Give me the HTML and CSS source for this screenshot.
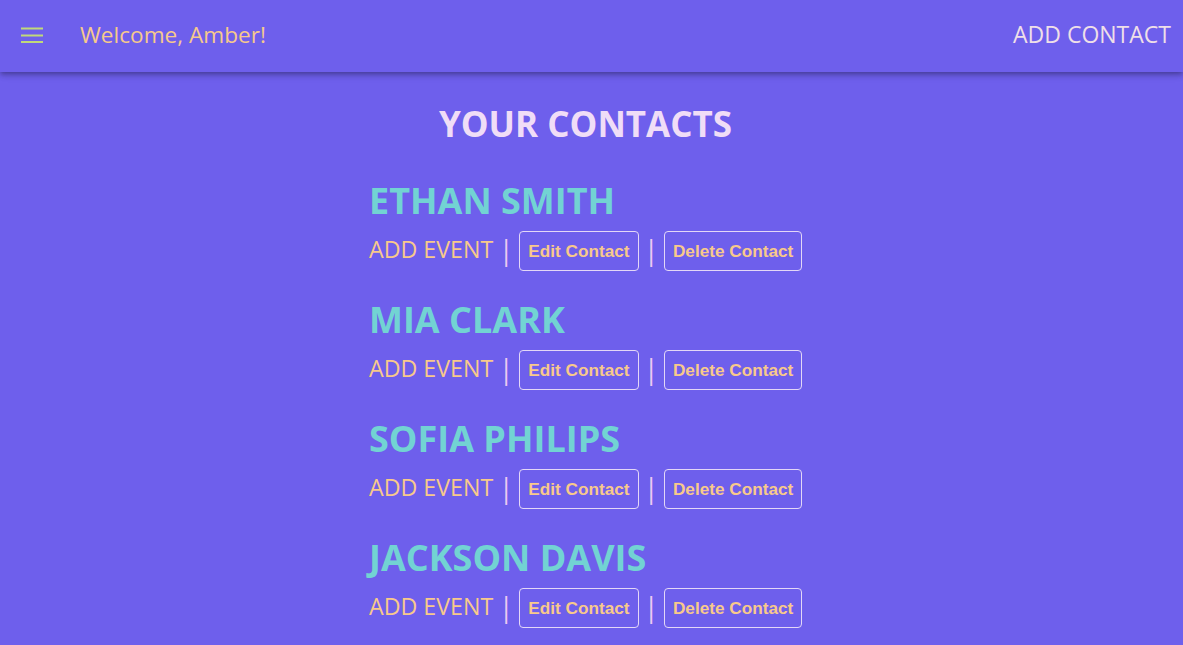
FILE: index.html
```html
<!DOCTYPE html>
<html lang="en">
<head>
<meta charset="utf-8">
<title>Contacts</title>
<link rel="stylesheet" href="styles.css">
</head>
<body>
<header class="appbar">
  <button class="menu-btn" aria-label="menu">
    <svg width="24" height="24" viewBox="0 0 24 24"><path d="M1 5.5h22M1 12.5h22M1 19h22" stroke="#c0d97a" stroke-width="2.2" fill="none"/></svg>
  </button>
  <span class="welcome">Welcome, Amber!</span>
  <span class="spacer"></span>
  <a class="add-contact">ADD CONTACT</a>
</header>
<main class="main">
  <h1 class="title">YOUR CONTACTS</h1>
  <ul class="contacts">
    <li class="contact">
      <h2 class="name">ETHAN SMITH</h2>
      <div class="actions"><a class="add-event">ADD EVENT</a><span class="sep">|</span><button class="btn">Edit Contact</button><span class="sep">|</span><button class="btn">Delete Contact</button></div>
    </li>
    <li class="contact">
      <h2 class="name">MIA CLARK</h2>
      <div class="actions"><a class="add-event">ADD EVENT</a><span class="sep">|</span><button class="btn">Edit Contact</button><span class="sep">|</span><button class="btn">Delete Contact</button></div>
    </li>
    <li class="contact">
      <h2 class="name">SOFIA PHILIPS</h2>
      <div class="actions"><a class="add-event">ADD EVENT</a><span class="sep">|</span><button class="btn">Edit Contact</button><span class="sep">|</span><button class="btn">Delete Contact</button></div>
    </li>
    <li class="contact">
      <h2 class="name">JACKSON DAVIS</h2>
      <div class="actions"><a class="add-event">ADD EVENT</a><span class="sep">|</span><button class="btn">Edit Contact</button><span class="sep">|</span><button class="btn">Delete Contact</button></div>
    </li>
  </ul>
</main>
</body>
</html>
```
FILE: styles.css
```css
html, body {
  margin: 0;
  padding: 0;
  background: #6e5fec;
  font-family: "Open Sans", "Noto Sans", sans-serif;
  overflow: hidden;
}
.appbar {
  height: 72px;
  display: flex;
  align-items: center;
  background: #6e5fec;
  box-shadow: 0 2px 4px -1px rgba(0,0,0,0.2), 0 4px 5px 0 rgba(0,0,0,0.14), 0 1px 10px 0 rgba(0,0,0,0.12);
  position: relative;
  z-index: 1;
  padding: 0 12px 0 20px;
}
.menu-btn {
  background: none;
  border: none;
  padding: 0;
  width: 24px;
  height: 24px;
  margin-top: -2px;
  display: flex;
}
.welcome {
  margin-left: 36px;
  color: #f6c98c;
  font-size: 22.6px;
  margin-top: -4px;
}
.spacer { flex: 1; }
.add-contact {
  color: #efdfe8;
  font-size: 23px;
  margin-top: -4px;
}
.main {
  display: flex;
  flex-direction: column;
  align-items: center;
}
.title {
  margin: 30px 0 0 -12px;
  font-size: 35px;
  font-weight: 700;
  color: #f0ddf7;
  line-height: 44px;
}
.contacts {
  list-style: none;
  margin: 32px 0 0 0;
  padding: 0;
  width: 445px;
}
.contact {
  height: 119px;
}
.name {
  margin: 0;
  font-size: 36px;
  font-weight: 700;
  color: #72d3d3;
  line-height: 46px;
}
.actions {
  display: flex;
  align-items: center;
  margin-top: 7px;
  height: 40px;
}
.add-event {
  color: #f8c98b;
  font-size: 23.2px;
  margin-top: -4px;
}
.sep {
  color: #eccaf0;
  font-size: 27px;
  width: 26px;
  text-align: center;
  margin-top: -4px;
}
.sep + .btn + .sep {
  width: 25px;
}
.btn {
  background: none;
  border: 1px solid #e3d7f7;
  border-radius: 4px;
  height: 40px;
  padding: 0 8.2px;
  color: #f8c98b;
  font-family: "Liberation Sans", Arial, sans-serif;
  font-weight: 700;
  font-size: 17.2px;
}
```
